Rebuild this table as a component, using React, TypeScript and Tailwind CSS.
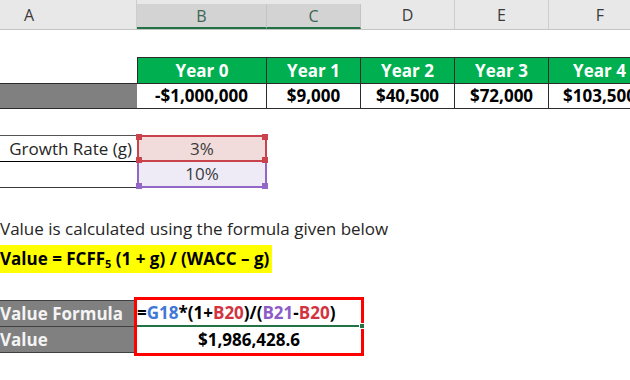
import React from "react"

const font = { fontFamily: "'Open Sans', Lato, sans-serif" }

function Corner({ pos, color }: { pos: string; color: string }) {
  return <span className={`absolute h-[6px] w-[6px] ${pos} ${color}`} />
}

export default function App() {
  const years = [
    { label: "Year 0", value: "-$1,000,000", w: "w-[130px]" },
    { label: "Year 1", value: "$9,000", w: "w-[94px]" },
    { label: "Year 2", value: "$40,500", w: "w-[94px]" },
    { label: "Year 3", value: "$72,000", w: "w-[94px]" },
    { label: "Year 4", value: "$103,500", w: "w-[102px]" },
  ]

  return (
    <div className="h-[380px] w-[630px] overflow-hidden bg-white text-[17px] text-[#1f1f1f]" style={font}>
      <div className="w-[651px]">
        {/* column headers */}
        <div className="flex h-[30px] border-b border-[#c4c4c4] bg-[#e8e8e8] text-[16px] text-[#3b3b3b]">
          <div className="flex w-[137px] items-center border-r border-[#cdcdcd] pl-[24px]">A</div>
          <div className="mt-[4px] flex w-[130px] items-center justify-center border-r border-[#c4c4c4] border-b-2 border-b-[#217346] bg-[#d3d3d3] text-[#3d6650]">
            B
          </div>
          <div className="mt-[4px] flex w-[94px] items-center justify-center border-r border-[#c4c4c4] border-b-2 border-b-[#217346] bg-[#d3d3d3] text-[#3d6650]">
            C
          </div>
          <div className="flex w-[94px] items-center justify-center border-r border-[#cdcdcd]">D</div>
          <div className="flex w-[94px] items-center justify-center border-r border-[#cdcdcd]">E</div>
          <div className="flex w-[102px] items-center justify-center">F</div>
        </div>

        <div className="h-[27px]" />

        {/* year headers */}
        <div className="flex h-[26px]">
          <div className="w-[137px]" />
          {years.map((y, i) => (
            <div
              key={y.label}
              className={`flex ${y.w} items-center justify-center border-t border-r border-[#2b2b2b] bg-[#00b050] font-bold text-white ${i === 0 ? "border-l" : ""}`}
            >
              {y.label}
            </div>
          ))}
        </div>

        {/* cash flows */}
        <div className="flex h-[26px] border-b border-[#2b2b2b]">
          <div className="w-[137px] border-t border-[#2b2b2b] bg-[#808080]" />
          {years.map((y) => (
            <div
              key={y.value}
              className={`flex ${y.w} items-center justify-center whitespace-nowrap border-t border-r border-[#2b2b2b] font-bold text-black`}
            >
              {y.value}
            </div>
          ))}
        </div>

        <div className="h-[26px]" />

        {/* growth rate */}
        <div className="flex h-[27px]">
          <div className="flex w-[137px] items-center justify-end whitespace-nowrap border-t border-b border-t-[#555555] border-b-black pr-[5px] text-[#262626]">
            Growth Rate (g)
          </div>
          <div className="relative flex w-[130px] items-center justify-center border-2 border-[#c9424c] bg-[#f2dcdb] text-[#3a3a3a]">
            3%
            <Corner pos="-left-[3px] -top-[3px]" color="bg-[#c9424c]" />
            <Corner pos="-right-[3px] -top-[3px]" color="bg-[#c9424c]" />
            <Corner pos="-left-[3px] -bottom-[3px] z-10" color="bg-[#c9424c]" />
            <Corner pos="-right-[3px] -bottom-[3px] z-10" color="bg-[#c9424c]" />
          </div>
        </div>
        <div className="flex h-[26px]">
          <div className="w-[137px] border-b border-[#3a3a3a]" />
          <div className="relative flex w-[130px] items-center justify-center border-x-2 border-b-2 border-[#9366c8] bg-[#efebf6] text-[#3a3a3a]">
            10%
            <Corner pos="-left-[3px] -bottom-[3px]" color="bg-[#9366c8]" />
            <Corner pos="-right-[3px] -bottom-[3px]" color="bg-[#9366c8]" />
          </div>
        </div>

        <div className="h-[27px]" />

        <div className="flex h-[27px] items-center whitespace-nowrap text-[#262626]">
          Value is calculated using the formula given below
        </div>

        <div className="h-[31px] pt-[3px]">
          <div className="flex h-[28px] w-[272px] items-center whitespace-nowrap bg-[#ffff00] font-bold text-black">
            <span>
              Value = FCFF<sub className="text-[11px] font-bold">5</sub> (1 + g) / (WACC – g)
            </span>
          </div>
        </div>

        <div className="h-[27px]" />

        {/* formula block */}
        <div className="flex">
          <div className="flex w-[137px] flex-col bg-[#808080] font-bold text-[#f4f4f4]">
            <div className="flex h-[27px] items-center whitespace-nowrap border-y border-[#3f3f3f]">Value Formula</div>
            <div className="flex h-[26px] items-center border-b border-[#3f3f3f]">Value</div>
          </div>
          <div className="relative flex w-[224px] flex-col font-bold outline-[3px] outline-[#ff0000] outline-solid">
            <div className="relative flex h-[27px] items-center whitespace-nowrap border-b-2 border-[#217346]">
              <span className="text-black">=</span>
              <span className="text-[#3f78d6]">G18</span>
              <span className="text-black">*(1+</span>
              <span className="text-[#d2343f]">B20</span>
              <span className="text-black">)/(</span>
              <span className="text-[#8e5cc6]">B21</span>
              <span className="text-black">-</span>
              <span className="text-[#d2343f]">B20</span>
              <span className="text-black">)</span>
              <span className="absolute -bottom-[4px] -right-[4px] z-10 h-[6px] w-[6px] border border-white bg-[#217346]" />
            </div>
            <div className="flex h-[26px] items-center justify-center text-black">$1,986,428.6</div>
          </div>
        </div>
      </div>
    </div>
  )
}
